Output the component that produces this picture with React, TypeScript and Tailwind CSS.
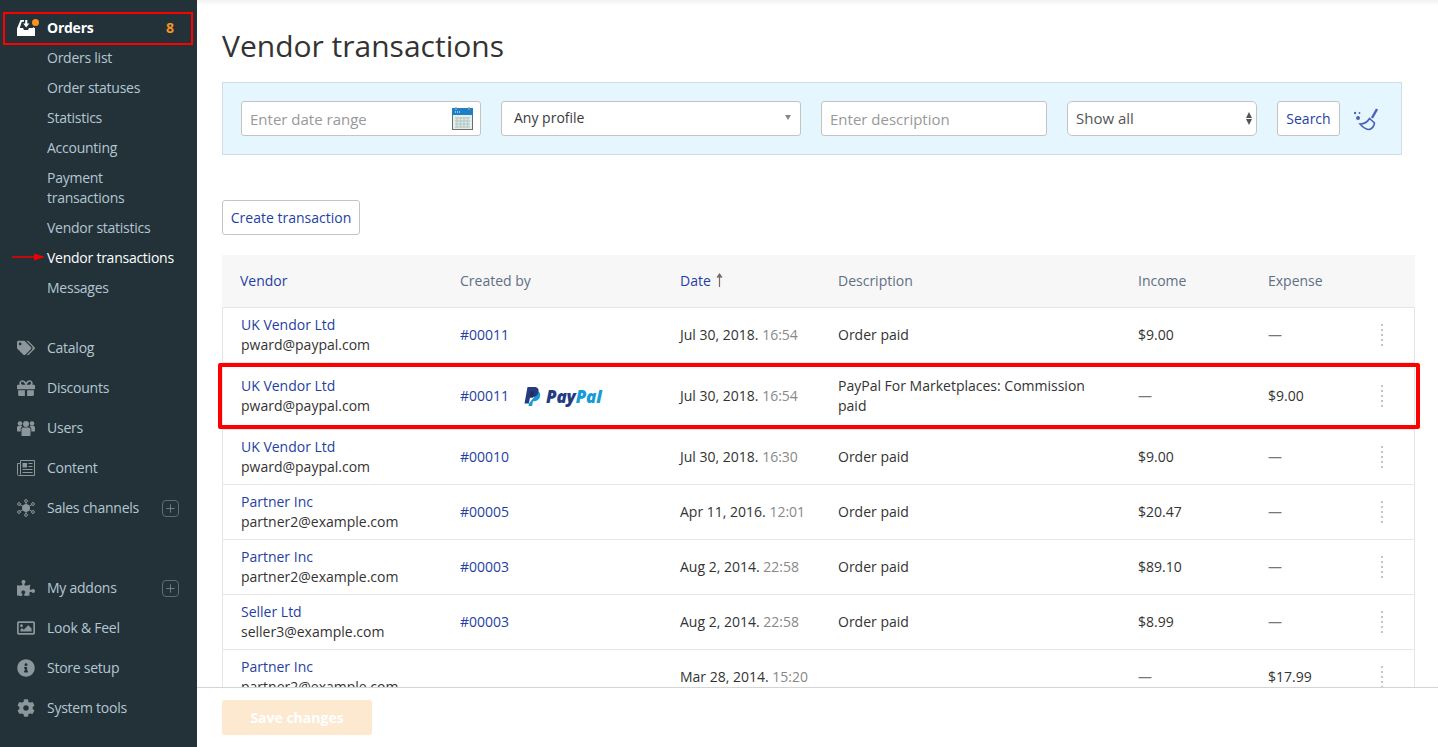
import { FaTags, FaGift, FaPuzzlePiece, FaRegImage, FaInfoCircle, FaCog } from "react-icons/fa"
import { Plus } from "lucide-react"
import type { ReactNode } from "react"

const subItems = ["Orders list", "Order statuses", "Statistics", "Accounting", "Payment transactions", "Vendor statistics", "Vendor transactions", "Messages"]

function HubIcon() {
  return (
    <svg viewBox="0 0 18 18" className="w-[18px] h-[18px]" fill="none" stroke="#8b979c" strokeWidth="1">
      <path d="M9 9 2 5M9 9l7-4M9 9 2 13M9 9l7 4M9 9V2M9 9v7" />
      <circle cx="9" cy="9" r="3.500" fill="#8b979c" />
      <circle cx="9" cy="2" r="1.400" fill="#233239" />
      <circle cx="9" cy="16" r="1.400" fill="#233239" />
      <circle cx="2" cy="5" r="1.400" fill="#233239" />
      <circle cx="16" cy="5" r="1.400" fill="#233239" />
      <circle cx="2" cy="13" r="1.400" fill="#233239" />
      <circle cx="16" cy="13" r="1.400" fill="#233239" />
    </svg>
  )
}

function UsersIcon() {
  return (
    <svg viewBox="0 0 18 16" className="w-[18px] h-[16px]" fill="#8b979c">
      <circle cx="9" cy="4" r="3" />
      <circle cx="3" cy="3.500" r="2.300" />
      <circle cx="15" cy="3.500" r="2.300" />
      <path d="M4.500 9.500c0-1.200 1-2 2-2h5c1 0 2 .8 2 2V15c0 .6-.4 1-1 1h-7c-.6 0-1-.4-1-1Z" />
      <path d="M0 7.500c0-1 .8-1.500 1.500-1.500h3.200c.4 0 .7.300.5.600-.8.600-1.500 1.500-1.500 2.900v2H1c-.6 0-1-.4-1-1ZM18 7.500c0-1-.8-1.500-1.500-1.500h-3.200c-.4 0-.7.300-.5.600.8.600 1.500 1.500 1.500 2.900v2H17c.6 0 1-.4 1-1Z" />
    </svg>
  )
}

function NewsIcon() {
  return (
    <svg viewBox="0 0 18 16" className="w-[18px] h-[16px]" fill="none" stroke="#8b979c">
      <path d="M3.500.5h14v15H1.500a1 1 0 0 1-1-1V3.500h3Z" />
      <path d="M3.500 3.500v11" />
      <path d="M5.500 3h4.500v4.500H5.500Z" fill="#8b979c" stroke="none" />
      <path d="M11.500 3.500h4M11.500 6.500h4M5.500 9.500h10M5.500 12.500h10" />
    </svg>
  )
}

const mainGroup: { label: string; icon: ReactNode; plus?: boolean }[] = [
  { label: "Catalog", icon: <FaTags className="w-[18px] h-[18px]" /> },
  { label: "Discounts", icon: <FaGift className="w-[18px] h-[18px]" /> },
  { label: "Users", icon: <UsersIcon /> },
  { label: "Content", icon: <NewsIcon /> },
  { label: "Sales channels", icon: <HubIcon />, plus: true },
]

const bottomGroup: { label: string; icon: ReactNode; plus?: boolean }[] = [
  { label: "My addons", icon: <FaPuzzlePiece className="w-[18px] h-[18px]" />, plus: true },
  { label: "Look & Feel", icon: <FaRegImage className="w-[18px] h-[18px]" /> },
  { label: "Store setup", icon: <FaInfoCircle className="w-[18px] h-[18px]" /> },
  { label: "System tools", icon: <FaCog className="w-[18px] h-[18px]" /> },
]

const rows = [
  { vendor: "UK Vendor Ltd", email: "pward@paypal.com", order: "#00011", date: "Jul 30, 2018.", time: "16:54", desc: "Order paid", income: "$9.00", expense: "—" },
  { vendor: "UK Vendor Ltd", email: "pward@paypal.com", order: "#00011", date: "Jul 30, 2018.", time: "16:54", desc: "PayPal For Marketplaces: Commission paid", income: "—", expense: "$9.00", paypal: true },
  { vendor: "UK Vendor Ltd", email: "pward@paypal.com", order: "#00010", date: "Jul 30, 2018.", time: "16:30", desc: "Order paid", income: "$9.00", expense: "—" },
  { vendor: "Partner Inc", email: "partner2@example.com", order: "#00005", date: "Apr 11, 2016.", time: "12:01", desc: "Order paid", income: "$20.47", expense: "—" },
  { vendor: "Partner Inc", email: "partner2@example.com", order: "#00003", date: "Aug 2, 2014.", time: "22:58", desc: "Order paid", income: "$89.10", expense: "—" },
  { vendor: "Seller Ltd", email: "seller3@example.com", order: "#00003", date: "Aug 2, 2014.", time: "22:58", desc: "Order paid", income: "$8.99", expense: "—" },
  { vendor: "Partner Inc", email: "partner2@example.com", order: "", date: "Mar 28, 2014.", time: "15:20", desc: "", income: "—", expense: "$17.99" },
]

function OrdersIcon() {
  return (
    <span className="relative w-[23px] h-[20px] block">
      <svg viewBox="0 0 18 16" className="absolute left-0 top-[2px] w-[18px] h-[16px]">
        <path fill="#fff" d="M3.500 0H7v1.800H4.800L2.800 8H6l1 2h4l1-2h4V7l2 1.200V16H0V8.500Z" />
        <path fill="#fff" d="M8.200 0h2.100v3.500h2L9.200 7.500 6.200 3.500h2Z" />
      </svg>
      <span className="absolute left-[15px] top-[1px] w-[7px] h-[7px] rounded-full bg-[#f7931e]" />
    </span>
  )
}

function NavRow({ label, icon, plus }: { label: string; icon: ReactNode; plus?: boolean }) {
  return (
    <div className="flex items-center h-[20px] pl-[17px] pr-[18px] mb-[20px] text-[#b4c6d2] tracking-[-0.25px]">
      <span className="w-[30px] flex justify-start text-[#8b979c]">{icon}</span>
      <span className="flex-1">{label}</span>
      {plus && (
        <span className="w-[17px] h-[17px] rounded-[4px] border border-[#5d6b72] flex items-center justify-center">
          <Plus className="w-[13px] h-[13px] text-[#7c8a91]" strokeWidth={1.500} />
        </span>
      )}
    </div>
  )
}

function Sidebar() {
  return (
    <aside className="w-[197px] shrink-0 bg-[#233239] relative pt-[18px]">
      <div className="absolute left-[3px] top-[12px] w-[190px] h-[33px] border-2 border-[#ff0000]" />
      <div className="flex items-center h-[20px] pl-[17px] pr-[23px] text-white font-bold">
        <span className="w-[30px]"><OrdersIcon /></span>
        <span className="flex-1 tracking-[-0.25px]">Orders</span>
        <span className="text-[#f7931e]">8</span>
      </div>
      <ul className="pl-[47px] pr-[21px] pt-[10px] mb-[30px] tracking-[-0.25px]">
        {subItems.map((item) => (
          <li
            key={item}
            className={`relative pb-[10px] ${item === "Vendor transactions" ? "text-white" : "text-[#b4c6d2]"}`}
          >
            {item === "Vendor transactions" && (
              <svg viewBox="0 0 33 8" className="absolute left-[-35px] top-[5px] w-[33px] h-[8px]">
                <path d="M0 4h26" stroke="#f00000" strokeWidth="1.500" />
                <path d="M22 0.500 33 4 22 7.500Z" fill="#f00000" />
              </svg>
            )}
            {item}
          </li>
        ))}
      </ul>
      <div className="mb-[60px]">
        {mainGroup.map((n) => (
          <NavRow key={n.label} {...n} />
        ))}
      </div>
      <div>
        {bottomGroup.map((n) => (
          <NavRow key={n.label} {...n} />
        ))}
      </div>
    </aside>
  )
}

function CalendarIcon() {
  return (
    <svg viewBox="0 0 21 23" className="w-[21px] h-[23px]">
      <rect x="0.500" y="1.500" width="20" height="21" fill="#e3efec" stroke="#6d6d6d" />
      <rect x="0" y="1" width="21" height="7" fill="#1f7fc4" />
      <path d="M4 0v3M17 0v3" stroke="#8fa3ad" strokeWidth="1.500" />
      <path d="M3 5h1M5 5h1M7 5h1" stroke="#fff" />
      <path d="M3 11h15M3 14h15M3 17h15M3 20h15M5 10v10M8.500 10v10M12 10v10M15.500 10v10" stroke="#b4c6c2" strokeWidth="1.500" opacity="0.800" />
    </svg>
  )
}

function BroomIcon() {
  return (
    <svg viewBox="0 0 24 24" className="w-[24px] h-[24px]" fill="none" stroke="#4a63b8" strokeWidth="1.600">
      <path d="M23 2 18 11" strokeWidth="2.400" />
      <path d="M6 17c4 0 7.500-2 9.500-5.500l5 4.500c-.5 3-2.500 5.500-5 6.500-3.500 0-6.500-2-9.500-5.500Z" />
      <circle cx="4" cy="11" r="2" fill="#4a63b8" stroke="none" />
      <circle cx="1" cy="6" r="1.200" fill="#4a63b8" stroke="none" />
      <circle cx="5.500" cy="6" r="0.900" fill="#4a63b8" stroke="none" />
    </svg>
  )
}

function FilterBar() {
  return (
    <div className="w-[1180px] h-[73px] bg-[#e6f6fe] border border-[#cfdee6] flex items-center pl-[18px] text-[#3a3a3a]">
      <div className="w-[240px] h-[35px] bg-white border border-[#c4c4c4] rounded-[3px] flex items-center justify-between pl-[8px] pr-[7px] text-[#999] text-[15px] mr-[20px]">
        Enter date range
        <CalendarIcon />
      </div>
      <div className="w-[300px] h-[35px] bg-white border border-[#c4c4c4] rounded-[3px] flex items-center justify-between pl-[12px] pr-[9px] pb-[2px] mr-[20px]">
        Any profile
        <span className="w-0 h-0 border-x-[3.500px] border-x-transparent border-t-[5px] border-t-[#888]" />
      </div>
      <div className="w-[226px] h-[35px] bg-white border border-[#c4c4c4] rounded-[3px] flex items-center pl-[8px] text-[#999] text-[15px] mr-[20px]">
        Enter description
      </div>
      <div className="w-[190px] h-[35px] bg-white border border-[#c4c4c4] rounded-[5px] flex items-center justify-between pl-[8px] pr-[4px] pb-[2px] text-[#555] text-[15px] mr-[20px]">
        Show all
        <span className="flex flex-col gap-[1px] pt-[2px]">
          <span className="w-0 h-0 border-x-[3.500px] border-x-transparent border-b-[6px] border-b-[#555]" />
          <span className="w-0 h-0 border-x-[3.500px] border-x-transparent border-t-[6px] border-t-[#555]" />
        </span>
      </div>
      <div className="w-[63px] h-[35px] bg-white border border-[#c4c4c4] rounded-[3px] flex items-center justify-center text-[#1f3fa3] mr-[14px]">
        Search
      </div>
      <BroomIcon />
    </div>
  )
}

function PayPalLogo() {
  return (
    <span className="flex items-center ml-[15px] mt-[1px]">
      <svg viewBox="0 0 17 19" className="w-[17px] h-[19px]">
        <path fill="#179bd7" d="M14.500 4.500c1.500 1 2 2.800 1.500 5-.8 3.300-3 4.700-6.300 4.700H9l-.9 4.800H4.500l.5-2.800 1-1Z" />
        <path fill="#253b80" d="M3.500 0h6.300c3.600 0 5.400 1.800 4.700 5-.8 3.700-3.200 5.400-6.800 5.400H6L4.800 16.500H.5Z" />
        <path fill="#222d65" d="M6.800 4.500h3.500L8.700 10.400H6Z" />
      </svg>
      <span className="ml-[5px] text-[17px] leading-none font-black italic tracking-[-0.200px]">
        <span className="text-[#253b80]">Pay</span>
        <span className="text-[#179bd7]">Pal</span>
      </span>
    </span>
  )
}

const gridCols = "grid grid-cols-[238px_220px_158px_300px_130px_1fr] items-center"
const rowCols = "grid grid-cols-[237px_220px_158px_300px_130px_1fr] items-center"

function SortArrow() {
  return (
    <svg viewBox="0 0 7 14" className="inline-block w-[7px] h-[14px] ml-[5px] align-[-1px]" fill="none" stroke="#7b6a62" strokeWidth="1.200">
      <path d="M3.500 14V1" />
      <path d="M1 4.500 3.500 1 6 4.500" fill="#7b6a62" />
    </svg>
  )
}

function TransactionsTable() {
  return (
    <div className="w-[1193px]">
      <div className={`${gridCols} h-[53px] bg-[#f7f7f7] border-b border-[#e6e6e6] text-[#5f6f85]`}>
        <span className="pl-[18px] text-[#1f3fa3]">Vendor</span>
        <span>Created by</span>
        <span className="text-[#1f3fa3]">
          Date<SortArrow />
        </span>
        <span>Description</span>
        <span>Income</span>
        <span>Expense</span>
      </div>
      {rows.map((r, i) => (
        <div
          key={i}
          className={`${rowCols} border-x border-b border-[#e6e6e6] text-[#333] ${r.paypal ? "h-[67px]" : "h-[55px]"}`}
        >
          <div className="pl-[18px] leading-[20px]">
            <div className="text-[#1f3fa3]">{r.vendor}</div>
            <div>{r.email}</div>
          </div>
          <div className="flex items-center">
            <span className="text-[#1f3fa3]">{r.order}</span>
            {r.paypal && <PayPalLogo />}
          </div>
          <div>
            {r.date} <span className="text-[#888]">{r.time}</span>
          </div>
          <div className="leading-[20px] pr-[40px]">{r.desc}</div>
          <div className={r.income === "—" ? "text-[#777]" : ""}>{r.income}</div>
          <div className="flex items-center justify-between pr-[31px]">
            <span className={r.expense === "—" ? "text-[#777]" : ""}>{r.expense}</span>
            <span className="flex flex-col gap-[3px]">
              <span className="w-[2px] h-[2px] bg-[#c4c4c4]" />
              <span className="w-[2px] h-[2px] bg-[#c4c4c4]" />
              <span className="w-[2px] h-[2px] bg-[#c4c4c4]" />
              <span className="w-[2px] h-[2px] bg-[#c4c4c4]" />
              <span className="w-[2px] h-[2px] bg-[#c4c4c4]" />
            </span>
          </div>
        </div>
      ))}
    </div>
  )
}

export default function App() {
  return (
    <div className="flex w-[1438px] h-[747px] overflow-hidden bg-white text-[14px] leading-[20px] font-['Open_Sans',sans-serif]">
      <Sidebar />
      <main className="flex-1 flex flex-col min-w-0 relative">
        <div className="flex-1 min-h-0 overflow-hidden pl-[25px] pt-[25px] bg-gradient-to-b from-[#f2f2f2] to-white to-[6px]">
          <h1 className="text-[30px] leading-[42px] text-[#333] mb-[15px]">Vendor transactions</h1>
          <FilterBar />
          <button className="block mt-[45px] mb-[20px] h-[35px] w-[138px] bg-white border border-[#c4c4c4] rounded-[3px] text-[#1f3fa3]">
            Create transaction
          </button>
          <TransactionsTable />
        </div>
        <div className="h-[60px] shrink-0 border-t border-[#d4d4d4] pl-[25px] pt-[12px] bg-white">
          <div className="w-[150px] h-[35px] rounded-[3px] bg-[#fde9cf] text-white font-bold flex items-center justify-center">
            Save changes
          </div>
        </div>
        <div className="absolute left-[21px] top-[363px] w-[1202px] h-[66px] border-4 border-[#ff0000] rounded-[2px]" />
      </main>
    </div>
  )
}
